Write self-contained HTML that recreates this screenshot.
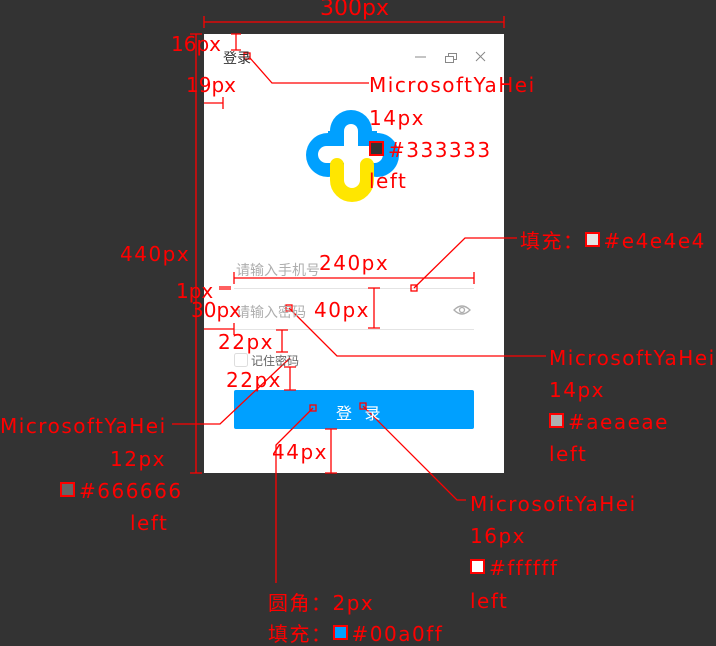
<!DOCTYPE html>
<html><head><meta charset="utf-8"><style>
body{margin:0;width:716px;height:645px;background:#333;position:relative;overflow:hidden;font-family:"DejaVu Sans","Liberation Sans","Noto Sans CJK SC",sans-serif}
.win{position:absolute;left:204px;top:34px;width:300px;height:439px;background:#fff}
.t{position:absolute;color:#333;font-size:14px;font-family:"Liberation Sans","Noto Sans CJK SC",sans-serif;white-space:nowrap}
.a{position:absolute;color:#f00;font-size:20px;line-height:24px;white-space:nowrap;letter-spacing:1.5px}
.sq{display:inline-block;width:11px;height:11px;border:2px solid #f00;vertical-align:1px;margin-right:4px}
svg{position:absolute;left:0;top:0}
</style></head><body>
<div class="win"></div>
<svg width="716" height="645">
  <line x1="415" y1="57" x2="426" y2="57" stroke="#888" stroke-width="1"/>
  <rect x="445.5" y="56.5" width="8" height="6" fill="none" stroke="#888"/>
  <path d="M448.5 56.5V53.5H456.5V59.5H453.5" fill="none" stroke="#888"/>
  <path d="M476 52L485 61M485 52L476 61" stroke="#888" stroke-width="1"/>
  <g fill="#00a0ff">
    <circle cx="351" cy="131" r="21"/>
    <circle cx="328" cy="155" r="22"/>
    <circle cx="377" cy="155" r="22"/>
    <rect x="328" y="131" width="49" height="40"/>
  </g>
  <g fill="#fff">
    <rect x="344" y="124" width="14" height="60" rx="7"/>
    <rect x="318" y="146" width="65" height="17" rx="8.5"/>
    <rect x="344" y="160" width="20" height="25"/>
  </g>
  <path d="M337 165V180A15 15 0 0 0 367 180V165" fill="none" stroke="#ffe600" stroke-width="14" stroke-linecap="round"/>
  <line x1="234" y1="288.5" x2="474" y2="288.5" stroke="#e4e4e4"/>
  <line x1="234" y1="329.5" x2="474" y2="329.5" stroke="#e4e4e4"/>
  <path d="M454 310Q462 302 470 310Q462 318 454 310Z" fill="none" stroke="#aeaeae" stroke-width="1.3"/>
  <circle cx="462" cy="310" r="2.5" fill="none" stroke="#aeaeae" stroke-width="1.3"/>
  <rect x="234.5" y="353.5" width="13" height="13" rx="2" fill="#fff" stroke="#ddd"/>
  <rect x="234" y="390" width="240" height="39" rx="2" fill="#00a0ff"/>
  <g stroke="#f00" stroke-width="1.3" fill="none">
    <path d="M204 22H504M204 16V28M504 16V28"/>
    <path d="M250 58L272 83H369"/>
    <path d="M236 34V50M231 34H241M231 50H241"/>
    <path d="M204 103H223M223 97V109"/>
    <path d="M196 34V473M190 34H202M190 473H202"/>
    <path d="M414 288L465 238H517"/>
    <path d="M234 278H474M234 272V284M474 272V284"/>
    <path d="M219 287H231M219 289H231"/>
    <path d="M204 329H234M234 323V335"/>
    <path d="M374 288V328M368 288H380M368 328H380"/>
    <path d="M289 308L337 356H546"/>
    <path d="M282 330V352M276 330H288M276 352H288"/>
    <path d="M290 367V390M284 367H296M284 390H296"/>
    <path d="M290 358L220 424H172"/>
    <path d="M331 429V473M325 429H337M325 473H337"/>
    <path d="M313 408L276 445V583"/>
    <path d="M363 406L457 500H466"/>
    <rect x="411" y="285" width="6" height="6"/>
    <rect x="286" y="305" width="6" height="6"/>
    <rect x="310" y="405" width="6" height="6"/>
    <rect x="360" y="403" width="6" height="6"/>
    <rect x="244" y="53" width="6" height="6"/>
  </g>
</svg>
<div class="t" style="left:223px;top:48px">登录</div>
<div class="t" style="left:236px;top:260px;color:#aeaeae">请输入手机号</div>
<div class="t" style="left:236px;top:302px;color:#aeaeae">请输入密码</div>
<div class="t" style="left:251px;top:352px;font-size:12px;color:#666">记住密码</div>
<div class="t" style="left:336px;top:400px;font-size:16px;color:#fff;letter-spacing:4px">登 录</div>

<div class="a" style="left:320px;top:-3px;font-size:22px;letter-spacing:0">300px</div>
<div class="a" style="left:171px;top:32px;letter-spacing:0">16px</div>
<div class="a" style="left:186px;top:73px;letter-spacing:0">19px</div>
<div class="a" style="left:369px;top:73px">MicrosoftYaHei</div>
<div class="a" style="left:369px;top:106px">14px</div>
<div class="a" style="left:369px;top:138px"><span class="sq" style="background:#333"></span>#333333</div>
<div class="a" style="left:369px;top:169px">left</div>
<div class="a" style="left:120px;top:242px">440px</div>
<div class="a" style="left:319px;top:251px">240px</div>
<div class="a" style="left:520px;top:229px">填充：<span class="sq" style="background:#e4e4e4"></span>#e4e4e4</div>
<div class="a" style="left:176px;top:279px;letter-spacing:0">1px</div>
<div class="a" style="left:191px;top:298px;letter-spacing:0">30px</div>
<div class="a" style="left:314px;top:298px">40px</div>
<div class="a" style="left:549px;top:346px">MicrosoftYaHei</div>
<div class="a" style="left:549px;top:378px">14px</div>
<div class="a" style="left:549px;top:410px"><span class="sq" style="background:#aeaeae"></span>#aeaeae</div>
<div class="a" style="left:549px;top:442px">left</div>
<div class="a" style="left:218px;top:330px">22px</div>
<div class="a" style="left:226px;top:368px">22px</div>
<div class="a" style="left:0px;top:414px">MicrosoftYaHei</div>
<div class="a" style="left:110px;top:447px">12px</div>
<div class="a" style="left:60px;top:479px"><span class="sq" style="background:#666"></span>#666666</div>
<div class="a" style="left:130px;top:511px">left</div>
<div class="a" style="left:272px;top:440px">44px</div>
<div class="a" style="left:470px;top:492px">MicrosoftYaHei</div>
<div class="a" style="left:470px;top:524px">16px</div>
<div class="a" style="left:470px;top:556px"><span class="sq" style="background:#fff"></span>#ffffff</div>
<div class="a" style="left:470px;top:589px">left</div>
<div class="a" style="left:268px;top:591px">圆角：2px</div>
<div class="a" style="left:268px;top:622px">填充：<span class="sq" style="background:#00a0ff"></span>#00a0ff</div>
</body></html>
